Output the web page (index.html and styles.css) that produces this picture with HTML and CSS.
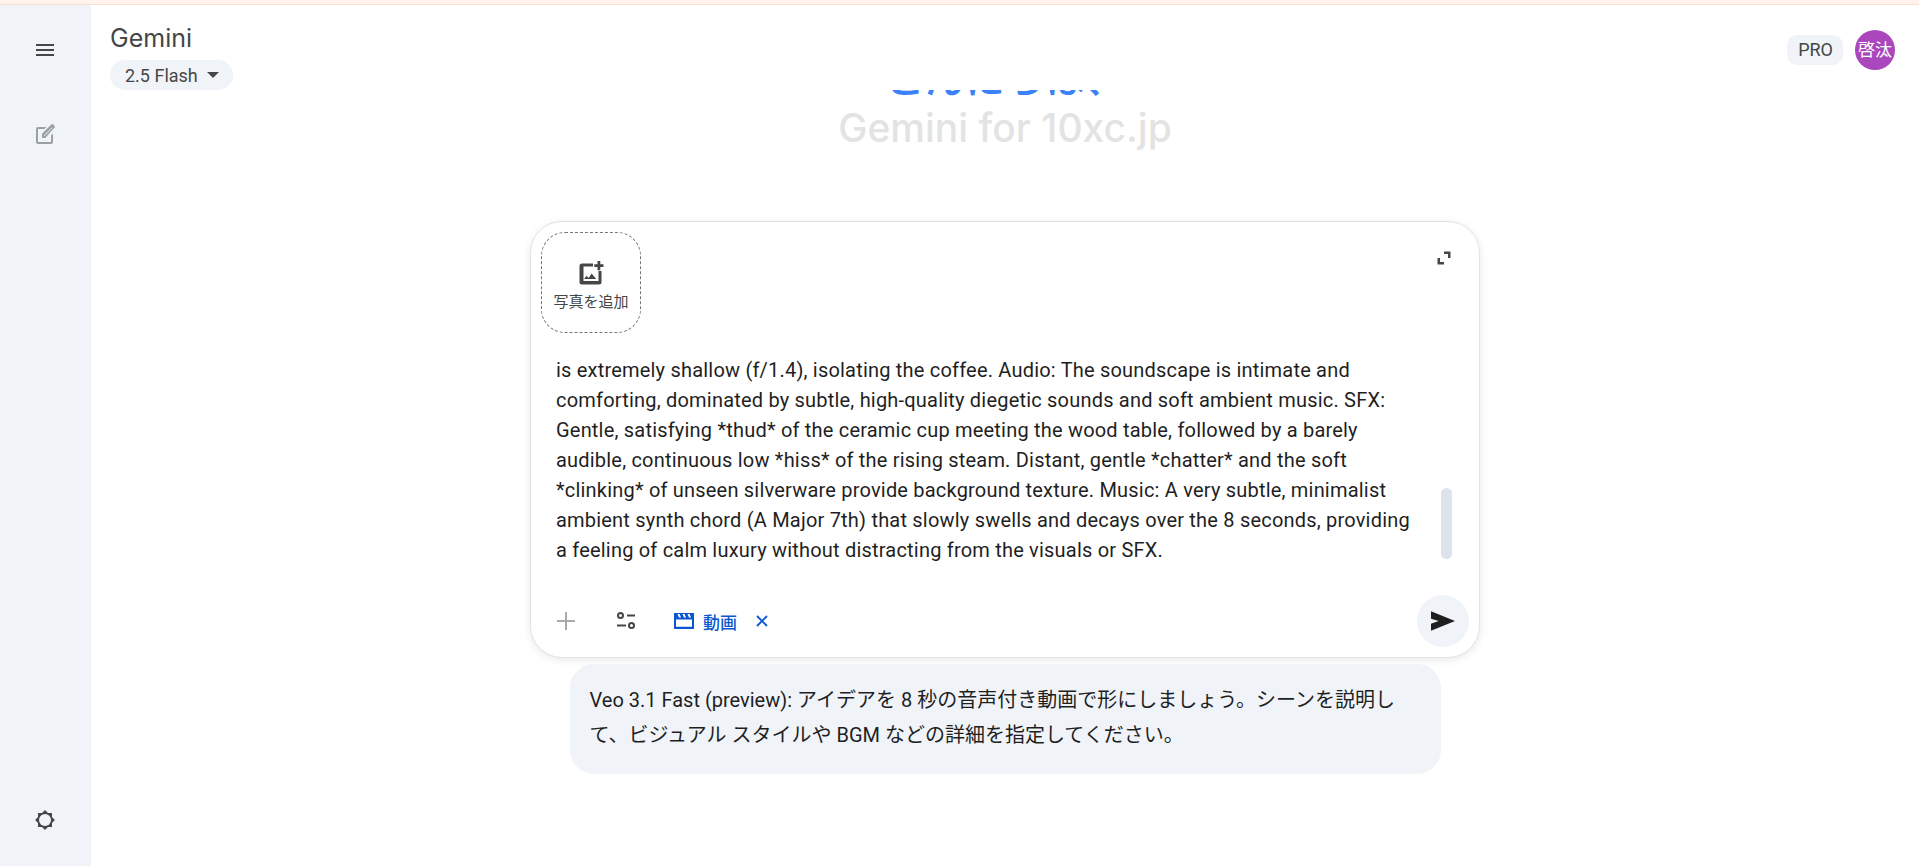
FILE: index.html
```html
<!DOCTYPE html>
<html lang="ja">
<head>
  <meta charset="UTF-8">
  <title>Gemini</title>
  <link rel="stylesheet" href="styles.css">
</head>
<body>

  <div class="top-strip"></div>

  <div class="app">
    <aside class="sidebar">
      <button class="side-btn menu-btn" aria-label="メニュー">
        <svg width="24" height="24" viewBox="0 0 24 24"><path d="M3 18h18v-2H3v2zm0-5h18v-2H3v2zm0-7v2h18V6H3z" fill="#444746"/></svg>
      </button>
      <button class="side-btn new-btn" aria-label="新しいチャット">
        <svg width="24" height="24" viewBox="0 0 24 24"><path d="M5 21a2 2 0 0 1-2-2V6a2 2 0 0 1 2-2h8.500l-2 2H5v13h13v-6.500l2-2V19a2 2 0 0 1-2 2H5zm4-6v-4.250L18.200 1.550a1.500 1.500 0 0 1 2.100 0l1.150 1.150a1.500 1.500 0 0 1 0 2.100L12.250 15H9zm2-2h.500l7.900-7.900-.500-.500L11 12.500v.500z" fill="#9aa0a6"/></svg>
      </button>
      <button class="side-btn gear-btn" aria-label="設定">
        <svg width="24" height="24" viewBox="0 0 24 24"><rect x="5" y="5" width="14" height="14" fill="#444746"/><rect x="5" y="5" width="14" height="14" transform="rotate(45 12 12)" fill="#444746"/><circle cx="12" cy="12" r="6" fill="#f0f4f9"/></svg>
      </button>
    </aside>

    <div class="main">
      <header class="topbar">
        <div class="brand">
          <div class="brand-name">Gemini</div>
          <button class="model-pill">2.5 Flash <span class="caret"></span></button>
        </div>
        <div class="account">
          <span class="pro">PRO</span>
          <span class="avatar">啓汰</span>
        </div>
      </header>

      <div class="greeting">
        <div class="hello-clip"><div class="hello">こんにちは、</div></div>
        <div class="tagline">Gemini for 10xc.jp</div>
      </div>

      <div class="composer">
        <div class="composer-top">
          <div class="add-photo">
            <svg width="26" height="26" viewBox="0 0 26 26"><path d="M4 3.500h11v3H5.500v14.500h15V11h3v11a2.500 2.500 0 0 1-2.500 2.500H4A2.500 2.500 0 0 1 1.500 22V6A2.500 2.500 0 0 1 4 3.500z" fill="#444746"/><path d="M19.500 1h2.800v3.200h3.200V7h-3.200v3.200h-2.800V7h-3.200V4.200h3.200z" fill="#444746"/><path d="M6 19l2.700-3.300 1.900 2.200 3-4.400 4.600 5.500z" fill="#444746"/></svg>
            <span>写真を追加</span>
          </div>
          <button class="expand-btn" aria-label="拡大">
            <svg width="16" height="16" viewBox="0 0 16 16"><path d="M8 1.500h6.500V8H12V4H8zM1.500 8H4v4h4v2.500H1.500z" fill="#444746"/></svg>
          </button>
        </div>

        <div class="prompt-wrap">
          <div class="prompt">
            is extremely shallow (f/1.4), isolating the coffee. Audio: The soundscape is intimate and<br>
            comforting, dominated by subtle, high-quality diegetic sounds and soft ambient music. SFX:<br>
            Gentle, satisfying *thud* of the ceramic cup meeting the wood table, followed by a barely<br>
            audible, continuous low *hiss* of the rising steam. Distant, gentle *chatter* and the soft<br>
            *clinking* of unseen silverware provide background texture. Music: A very subtle, minimalist<br>
            ambient synth chord (A Major 7th) that slowly swells and decays over the 8 seconds, providing<br>
            a feeling of calm luxury without distracting from the visuals or SFX.
          </div>
          <div class="scrollbar"></div>
        </div>

        <div class="toolbar">
          <button class="tool-btn" aria-label="追加">
            <svg width="24" height="24" viewBox="0 0 24 24"><path d="M11 3h2v8h8v2h-8v8h-2v-8H3v-2h8z" fill="#a8abae"/></svg>
          </button>
          <button class="tool-btn tune-btn" aria-label="ツール">
            <svg width="24" height="24" viewBox="0 0 24 24" fill="none" stroke="#444746" stroke-width="2"><circle cx="6.500" cy="6.500" r="2.500"/><path d="M13 6.500h8M3 16.500h9"/><circle cx="17.500" cy="16.500" r="2.500"/></svg>
          </button>
          <div class="chip">
            <svg width="20" height="16" viewBox="0 0 20 16"><path d="M0 0h20v16H0zM2 6.500v7.300h16V6.500zM3.500 1l1.500 3.500h2L5.500 1zm5 0L10 4.500h2L10.500 1zm5 0L15 4.500h2L15.500 1z" fill="#0b57d0" fill-rule="evenodd"/></svg>
            <span>動画</span>
            <svg class="chip-x" width="14" height="14" viewBox="0 0 14 14"><path d="M2 2l10 10M12 2L2 12" stroke="#0b57d0" stroke-width="1.800"/></svg>
          </div>
          <button class="send-btn" aria-label="送信">
            <svg width="24" height="20" viewBox="0 0 22 18"><path d="M0 0l22 9-22 9v-6.500L7 9 0 7z" fill="#1f1f1f"/></svg>
          </button>
        </div>
      </div>

      <div class="hint">
        Veo 3.1 Fast (preview): アイデアを 8 秒の音声付き動画で形にしましょう。シーンを説明し<br>
        て、ビジュアル スタイルや BGM などの詳細を指定してください。
      </div>
    </div>
  </div>

</body>
</html>
```

FILE: styles.css
```css
* {
  box-sizing: border-box;
}

html, body {
  height: 100%;
}

body {
  margin: 0;
  font-family: 'Roboto', 'Noto Sans CJK JP', sans-serif;
  color: #1f1f1f;
  background: #fff;
  overflow: hidden;
  display: flex;
  flex-direction: column;
}

button {
  border: none;
  background: none;
  padding: 0;
  font-family: inherit;
  cursor: pointer;
}

.top-strip {
  height: 5px;
  flex: none;
  background: #fff3ec;
  border-bottom: 1px solid #fbdfd0;
}

.app {
  flex: 1;
  display: flex;
  min-height: 0;
}

.sidebar {
  width: 91px;
  flex: none;
  background: #f0f4f9;
  display: flex;
  flex-direction: column;
  align-items: center;
  padding: 33px 1px 34px 0;
}

.side-btn {
  width: 24px;
  height: 24px;
}

.new-btn {
  margin-top: 61px;
}

.gear-btn {
  margin-top: auto;
}

.main {
  flex: 1;
  display: flex;
  flex-direction: column;
  align-items: center;
  min-width: 0;
}

.topbar {
  width: 100%;
  height: 85px;
  flex: none;
  display: flex;
  justify-content: space-between;
  padding: 18px 24px 0 19px;
}

.brand-name {
  font-family: 'Inter', 'Roboto', sans-serif;
  font-size: 25px;
  line-height: 30px;
  color: #444746;
}

.model-pill {
  margin-top: 7px;
  height: 30px;
  padding: 0 14px 0 15px;
  border-radius: 15px;
  background: #f0f4f9;
  color: #444746;
  font-size: 18px;
  display: flex;
  align-items: center;
  gap: 9px;
}

.caret {
  width: 0;
  height: 0;
  border-left: 6px solid transparent;
  border-right: 6px solid transparent;
  border-top: 6px solid #444746;
}

.account {
  display: flex;
  align-items: flex-start;
  gap: 12px;
  margin-top: -13px;
  padding-top: 20px;
}

.pro {
  margin-top: 5px;
  height: 30px;
  padding: 0 10px 0 11px;
  border-radius: 10px;
  background: #f0f4f9;
  color: #444746;
  font-size: 18px;
  line-height: 30px;
}

.avatar {
  width: 40px;
  height: 40px;
  border-radius: 50%;
  background: #ab47bc;
  color: #fff;
  font-size: 17px;
  line-height: 40px;
  text-align: center;
}

.greeting {
  height: 131px;
  flex: none;
  text-align: center;
}

.hello-clip {
  height: 10px;
  overflow: hidden;
  display: flex;
  align-items: flex-end;
  justify-content: center;
}

.hello {
  font-size: 40px;
  line-height: 40px;
  font-weight: 500;
  color: #3b82f6;
  white-space: nowrap;
}

.tagline {
  font-family: 'Inter', 'Roboto', sans-serif;
  font-size: 39px;
  line-height: 50px;
  font-weight: 500;
  color: #e3e3e3;
  margin-top: 3px;
}

.composer {
  width: 950px;
  height: 437px;
  flex: none;
  background: #fff;
  border: 1px solid #e3e3e3;
  border-radius: 32px;
  box-shadow: 0 2px 8px rgba(0, 0, 0, 0.09);
  display: flex;
  flex-direction: column;
  padding: 10px;
}

.composer-top {
  display: flex;
  justify-content: space-between;
  align-items: flex-start;
}

.add-photo {
  width: 100px;
  height: 101px;
  padding-top: 6px;
  border: 1px dashed #747775;
  border-radius: 24px;
  display: flex;
  flex-direction: column;
  align-items: center;
  justify-content: center;
  gap: 4px;
  font-size: 15px;
  color: #444746;
}

.expand-btn {
  width: 16px;
  height: 16px;
  margin: 18px 17px 0 0;
}

.prompt-wrap {
  display: flex;
  justify-content: space-between;
  margin-top: 22px;
}

.prompt {
  padding-left: 15px;
  font-size: 20px;
  letter-spacing: 0.2px;
  line-height: 30px;
  color: #1f1f1f;
  white-space: nowrap;
}

.scrollbar {
  width: 11px;
  height: 71px;
  margin: 133px 17px 0 0;
  border-radius: 6px;
  background: #dde3ea;
}

.toolbar {
  margin-top: auto;
  display: flex;
  align-items: center;
}

.tool-btn {
  width: 24px;
  height: 24px;
  margin-left: 13px;
}

.tune-btn {
  margin-left: 36px;
}

.chip {
  margin-left: 36px;
  display: flex;
  align-items: center;
  gap: 9px;
  color: #0b57d0;
  font-size: 17px;
  font-weight: 500;
}

.chip-x {
  margin-left: 9px;
}

.send-btn {
  margin-left: auto;
  width: 52px;
  height: 52px;
  border-radius: 50%;
  background: #f0f4f9;
  display: flex;
  align-items: center;
  justify-content: center;
}

.hint {
  width: 871px;
  height: 110px;
  flex: none;
  margin-top: 6px;
  padding: 19px 20px;
  border-radius: 24px;
  background: #f0f4f9;
  font-size: 20px;
  line-height: 35px;
  color: #1f1f1f;
  white-space: nowrap;
}
```
